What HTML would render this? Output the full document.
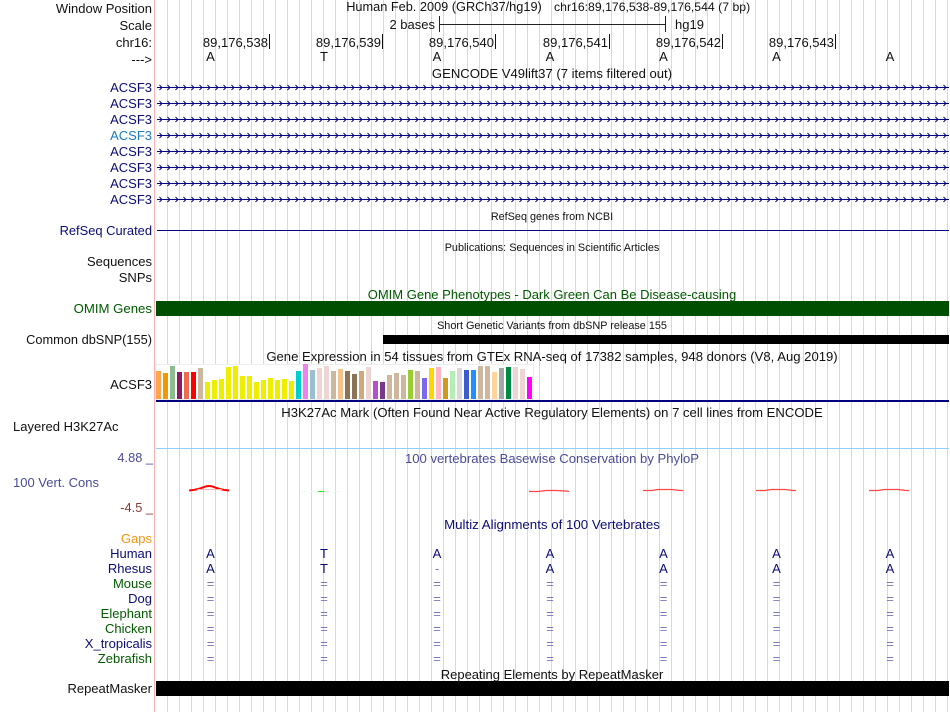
<!DOCTYPE html>
<html><head><meta charset="utf-8"><style>
html,body{margin:0;padding:0;background:#fff}
svg{display:block;position:absolute;left:0;top:0}
text{font-family:"Liberation Sans",sans-serif;font-size:13px;fill:#111}
.e{text-anchor:end}.m{text-anchor:middle}
.n{fill:#0c0c78}.g{fill:#005a00}.s{font-size:10.85px}
.p{fill:#4b4b9c}.q{fill:#7878b8}
</style></head><body>
<svg width="950" height="712" viewBox="0 0 950 712" xmlns="http://www.w3.org/2000/svg">
<defs>
<pattern id="chev" x="158" y="80" width="8" height="16" patternUnits="userSpaceOnUse"><path d="M1.500 5 L4 7.500 L1.500 10" fill="none" stroke="#000080" stroke-width="1"/></pattern>
</defs>
<rect width="950" height="712" fill="#fff"/>
<line x1="167" y1="356" x2="950" y2="356" stroke="#d8d4f3" stroke-width="712" stroke-dasharray="1 11"/>
<rect x="154" width="1" height="712" fill="#ffb0b0"/>

<text class="e" x="152" y="13">Window Position</text>
<text class="e" x="152" y="30">Scale</text>
<text class="e" x="152" y="47">chr16:</text>
<text class="e" x="152" y="64">---&gt;</text>
<text class="m" x="444" y="11" style="font-size:12.75px">Human Feb. 2009 (GRCh37/hg19)</text>
<text x="554" y="11" style="font-size:12.25px">chr16:89,176,538-89,176,544 (7 bp)</text>
<text class="e" x="435" y="29">2 bases</text>
<text x="675" y="29">hg19</text>
<path d="M439.500 16V32M665.500 16V32M439.500 24.500H665.500" stroke="#222" fill="none"/>
<g>
<text class="e" x="268" y="47">89,176,538</text>
<text class="e" x="381" y="47">89,176,539</text>
<text class="e" x="494" y="47">89,176,540</text>
<text class="e" x="608" y="47">89,176,541</text>
<text class="e" x="721" y="47">89,176,542</text>
<text class="e" x="834" y="47">89,176,543</text>
</g>
<path d="M269.500 34V49M382.500 34V49M495.500 34V49M609.500 34V49M722.500 34V49M835.500 34V49" stroke="#111"/>
<g>
<text class="m" x="210.500" y="61">A</text><text class="m" x="324" y="61">T</text><text class="m" x="437" y="61">A</text><text class="m" x="550" y="61">A</text><text class="m" x="663.500" y="61">A</text><text class="m" x="776.500" y="61">A</text><text class="m" x="890" y="61">A</text>
</g>
<text class="m" x="552" y="78" style="font-size:13.1px">GENCODE V49lift37 (7 items filtered out)</text>

<g>
<text class="e n" x="152" y="92">ACSF3</text>
<text class="e n" x="152" y="108">ACSF3</text>
<text class="e n" x="152" y="124">ACSF3</text>
<text class="e" x="152" y="140" style="fill:#1a7cc0">ACSF3</text>
<text class="e n" x="152" y="156">ACSF3</text>
<text class="e n" x="152" y="172">ACSF3</text>
<text class="e n" x="152" y="188">ACSF3</text>
<text class="e n" x="152" y="204">ACSF3</text>
</g>
<g fill="#000080">
<rect x="157" y="87" width="792" height="1"/><rect x="157" y="103" width="792" height="1"/><rect x="157" y="119" width="792" height="1"/><rect x="157" y="135" width="792" height="1"/><rect x="157" y="151" width="792" height="1"/><rect x="157" y="167" width="792" height="1"/><rect x="157" y="183" width="792" height="1"/><rect x="157" y="199" width="792" height="1"/>
</g>
<rect x="157" y="80" width="792" height="128" fill="url(#chev)"/>

<text class="m s" x="552" y="220">RefSeq genes from NCBI</text>
<text class="e n" x="152" y="235" style="font-size:12.9px">RefSeq Curated</text>
<rect x="157" y="230" width="792" height="1" fill="#000080"/>
<text class="m s" x="552" y="251">Publications: Sequences in Scientific Articles</text>
<text class="e" x="152" y="266">Sequences</text>
<text class="e" x="152" y="282">SNPs</text>
<text class="m g" x="552" y="299">OMIM Gene Phenotypes - Dark Green Can Be Disease-causing</text>
<text class="e g" x="152" y="313" style="font-size:13.2px">OMIM Genes</text>
<rect x="156" y="301" width="793" height="15" fill="#004e00"/>
<text class="m s" x="552" y="329">Short Genetic Variants from dbSNP release 155</text>
<text class="e" x="152" y="344" style="font-size:12.8px">Common dbSNP(155)</text>
<rect x="383" y="335" width="566" height="9" fill="#000"/>
<text class="m" x="552" y="361" style="font-size:13.1px">Gene Expression in 54 tissues from GTEx RNA-seq of 17382 samples, 948 donors (V8, Aug 2019)</text>
<text class="e" x="152" y="389">ACSF3</text>

<rect x="155.500" y="364.500" width="378" height="35" fill="#fff" stroke="#eee"/>
<g>
<rect x="156" y="371" width="5" height="28" fill="#FFA54F"/><rect x="163" y="373" width="5" height="26" fill="#EE9A00"/><rect x="170" y="366" width="5" height="33" fill="#8FBC8F"/><rect x="177" y="372" width="5" height="27" fill="#8B1C62"/><rect x="184" y="372" width="5" height="27" fill="#EE6A50"/><rect x="191" y="372" width="5" height="27" fill="#FF0000"/><rect x="198" y="368" width="5" height="31" fill="#CDB79E"/>
<g fill="#EEEE00"><rect x="205" y="382" width="5" height="17"/><rect x="212" y="380" width="5" height="19"/><rect x="219" y="379" width="5" height="20"/><rect x="226" y="367" width="5" height="32"/><rect x="233" y="366" width="5" height="33"/><rect x="240" y="376" width="5" height="23"/><rect x="247" y="376" width="5" height="23"/><rect x="254" y="382" width="5" height="17"/><rect x="261" y="380" width="5" height="19"/><rect x="268" y="378" width="5" height="21"/><rect x="275" y="380" width="5" height="19"/><rect x="282" y="379" width="5" height="20"/><rect x="289" y="381" width="5" height="18"/></g>
<rect x="296" y="371" width="5" height="28" fill="#00CDCD"/><rect x="303" y="364" width="5" height="35" fill="#EE82EE"/><rect x="310" y="370" width="5" height="29" fill="#9AC0CD"/><rect x="317" y="368" width="5" height="31" fill="#EED5D2"/><rect x="324" y="366" width="5" height="33" fill="#EED5D2"/><rect x="331" y="371" width="5" height="28" fill="#CDB79E"/><rect x="338" y="369" width="5" height="30" fill="#F4C28A"/><rect x="345" y="371" width="5" height="28" fill="#8B7355"/><rect x="352" y="374" width="5" height="25" fill="#8B7355"/><rect x="359" y="371" width="5" height="28" fill="#CDAA7D"/><rect x="366" y="367" width="5" height="32" fill="#EED5D2"/><rect x="373" y="381" width="5" height="18" fill="#B452CD"/><rect x="380" y="382" width="5" height="17" fill="#7A378B"/><rect x="387" y="375" width="5" height="24" fill="#CDB79E"/><rect x="394" y="373" width="5" height="26" fill="#CDB79E"/><rect x="401" y="375" width="5" height="24" fill="#CDB79E"/><rect x="408" y="370" width="5" height="29" fill="#9ACD32"/><rect x="415" y="371" width="5" height="28" fill="#CDB79E"/><rect x="422" y="378" width="5" height="21" fill="#7B68EE"/><rect x="429" y="368" width="5" height="31" fill="#FFD700"/><rect x="436" y="367" width="5" height="32" fill="#FFB6C1"/><rect x="443" y="378" width="5" height="21" fill="#CD9B1D"/><rect x="450" y="371" width="5" height="28" fill="#B4EEB4"/><rect x="457" y="368" width="5" height="31" fill="#D9D9D9"/><rect x="464" y="370" width="5" height="29" fill="#3A5FCD"/><rect x="471" y="370" width="5" height="29" fill="#1E90FF"/><rect x="478" y="366" width="5" height="33" fill="#CDB79E"/><rect x="485" y="366" width="5" height="33" fill="#CDB79E"/><rect x="492" y="372" width="5" height="27" fill="#FFD39B"/><rect x="499" y="368" width="5" height="31" fill="#A6A6A6"/><rect x="506" y="367" width="5" height="32" fill="#008B45"/><rect x="513" y="367" width="5" height="32" fill="#EED5D2"/><rect x="520" y="369" width="5" height="30" fill="#EED5D2"/><rect x="527" y="377" width="5" height="22" fill="#FF00FF"/>
</g>
<rect x="156" y="400" width="793" height="2" fill="#000080"/>

<text class="m" x="552" y="417" style="font-size:13.1px">H3K27Ac Mark (Often Found Near Active Regulatory Elements) on 7 cell lines from ENCODE</text>
<text x="13" y="431">Layered H3K27Ac</text>
<rect x="156" y="448" width="793" height="1" fill="#8fd0fa"/>

<text class="m p" x="552" y="463" style="font-size:13.1px">100 vertebrates Basewise Conservation by PhyloP</text>
<text class="e p" x="153" y="462" style="font-size:12.8px">4.88 _</text>
<text class="p" x="13" y="487">100 Vert. Cons</text>
<text class="e" x="153" y="512" style="fill:#8b3a3a;font-size:12.8px">-4.5 _</text>

<path d="M189 490.500 Q199 489.500 204 487 Q209 485 214 487 Q219 489.500 229 490.500" fill="none" stroke="#f00" stroke-width="2"/>
<path d="M197 489.500H222" stroke="#ffb0b0" fill="none"/>
<rect x="302" y="491" width="38" height="1" fill="#eefbee"/>
<rect x="318" y="491" width="6" height="1" fill="#22e022"/>
<g fill="none" stroke-width="1.300">
<path d="M529 491.500H538L546 490.500H556L566 491L569 491.500" stroke="#f44"/>
<path d="M643 490.500H652L658 489.500H672L680 490.500H683" stroke="#f44"/>
<path d="M756 490.500H765L771 489.500H785L793 490.500H796" stroke="#f44"/>
<path d="M869 490.500H878L884 489.500H898L906 490.500H909" stroke="#f44"/>
</g>

<text class="m n" x="552" y="529" style="font-size:13.3px">Multiz Alignments of 100 Vertebrates</text>
<text class="e" x="152" y="543" style="fill:#f59412">Gaps</text>
<text class="e n" x="152" y="558">Human</text>
<text class="e n" x="152" y="573">Rhesus</text>
<text class="e g" x="152" y="588">Mouse</text>
<text class="e n" x="152" y="603">Dog</text>
<text class="e g" x="152" y="618">Elephant</text>
<text class="e g" x="152" y="633">Chicken</text>
<text class="e n" x="152" y="648">X_tropicalis</text>
<text class="e g" x="152" y="663">Zebrafish</text>

<g>
<text class="m n" x="210.500" y="558">A</text><text class="m n" x="324" y="558">T</text><text class="m n" x="437" y="558">A</text><text class="m n" x="550" y="558">A</text><text class="m n" x="663.500" y="558">A</text><text class="m n" x="776.500" y="558">A</text><text class="m n" x="890" y="558">A</text>
<text class="m n" x="210.500" y="573">A</text><text class="m n" x="324" y="573">T</text><text class="m q" x="437" y="573">-</text><text class="m n" x="550" y="573">A</text><text class="m n" x="663.500" y="573">A</text><text class="m n" x="776.500" y="573">A</text><text class="m n" x="890" y="573">A</text>
</g>
<g>
<text class="m q" x="210.500" y="588">=</text><text class="m q" x="324" y="588">=</text><text class="m q" x="437" y="588">=</text><text class="m q" x="550" y="588">=</text><text class="m q" x="663.500" y="588">=</text><text class="m q" x="776.500" y="588">=</text><text class="m q" x="890" y="588">=</text>
<text class="m q" x="210.500" y="603">=</text><text class="m q" x="324" y="603">=</text><text class="m q" x="437" y="603">=</text><text class="m q" x="550" y="603">=</text><text class="m q" x="663.500" y="603">=</text><text class="m q" x="776.500" y="603">=</text><text class="m q" x="890" y="603">=</text>
<text class="m q" x="210.500" y="618">=</text><text class="m q" x="324" y="618">=</text><text class="m q" x="437" y="618">=</text><text class="m q" x="550" y="618">=</text><text class="m q" x="663.500" y="618">=</text><text class="m q" x="776.500" y="618">=</text><text class="m q" x="890" y="618">=</text>
<text class="m q" x="210.500" y="633">=</text><text class="m q" x="324" y="633">=</text><text class="m q" x="437" y="633">=</text><text class="m q" x="550" y="633">=</text><text class="m q" x="663.500" y="633">=</text><text class="m q" x="776.500" y="633">=</text><text class="m q" x="890" y="633">=</text>
<text class="m q" x="210.500" y="648">=</text><text class="m q" x="324" y="648">=</text><text class="m q" x="437" y="648">=</text><text class="m q" x="550" y="648">=</text><text class="m q" x="663.500" y="648">=</text><text class="m q" x="776.500" y="648">=</text><text class="m q" x="890" y="648">=</text>
<text class="m q" x="210.500" y="663">=</text><text class="m q" x="324" y="663">=</text><text class="m q" x="437" y="663">=</text><text class="m q" x="550" y="663">=</text><text class="m q" x="663.500" y="663">=</text><text class="m q" x="776.500" y="663">=</text><text class="m q" x="890" y="663">=</text>
</g>

<text class="m" x="552" y="679">Repeating Elements by RepeatMasker</text>
<text class="e" x="152" y="693">RepeatMasker</text>
<rect x="156" y="681" width="793" height="15" fill="#000"/>
</svg>
</body></html>
